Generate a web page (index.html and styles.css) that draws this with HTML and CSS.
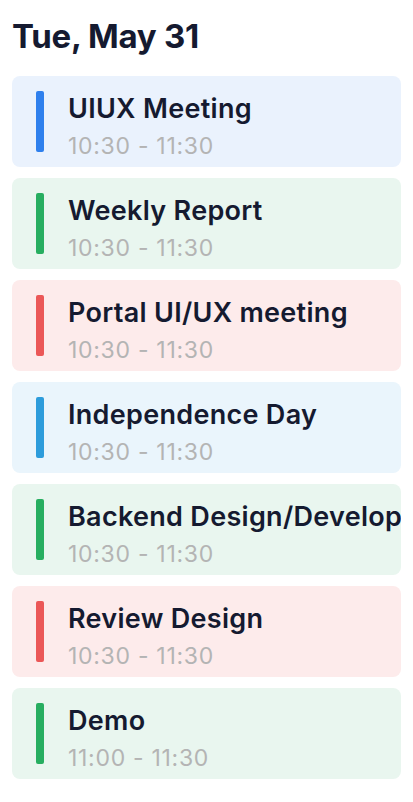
FILE: index.html
```html
<!DOCTYPE html>
<html lang="en">
<head>
<meta charset="utf-8">
<title>Schedule</title>
<link rel="stylesheet" href="styles.css">
</head>
<body>
<main class="day">
  <h1 class="day-title">Tue, May 31</h1>
  <ul class="events">
    <li class="event event-blue"><span class="bar"></span><div class="info"><div class="name">UIUX Meeting</div><div class="time">10:30 - 11:30</div></div></li>
    <li class="event event-green"><span class="bar"></span><div class="info"><div class="name">Weekly Report</div><div class="time">10:30 - 11:30</div></div></li>
    <li class="event event-red"><span class="bar"></span><div class="info"><div class="name">Portal UI/UX meeting</div><div class="time">10:30 - 11:30</div></div></li>
    <li class="event event-sky"><span class="bar"></span><div class="info"><div class="name">Independence Day</div><div class="time">10:30 - 11:30</div></div></li>
    <li class="event event-green"><span class="bar"></span><div class="info"><div class="name">Backend Design/Development</div><div class="time">10:30 - 11:30</div></div></li>
    <li class="event event-red"><span class="bar"></span><div class="info"><div class="name">Review Design</div><div class="time">10:30 - 11:30</div></div></li>
    <li class="event event-green"><span class="bar"></span><div class="info"><div class="name">Demo</div><div class="time">11:00 - 11:30</div></div></li>
  </ul>
</main>
</body>
</html>
```

FILE: styles.css
```css
* { box-sizing: border-box; }
html, body { margin: 0; padding: 0; background: #ffffff; }
body {
  font-family: Inter, "Noto Sans", sans-serif;
  color: #151a30;
}
.day {
  padding: 14px 12px 0 12px;
}
.day-title {
  margin: 0;
  font-size: 33px;
  line-height: 44px;
  font-weight: 700;
  letter-spacing: -0.3px;
  color: #151a30;
}
.events {
  list-style: none;
  margin: 18px 0 0 0;
  padding: 0;
  display: flex;
  flex-direction: column;
  gap: 11px;
}
.event {
  display: flex;
  align-items: flex-start;
  gap: 24px;
  height: 91px;
  padding: 15px 0 0 24px;
  border-radius: 8px;
  overflow: hidden;
}
.bar {
  flex: 0 0 8px;
  width: 8px;
  height: 61px;
  border-radius: 2px;
}
.info {
  display: flex;
  flex-direction: column;
  min-width: 0;
  white-space: nowrap;
}
.name {
  font-size: 27px;
  line-height: 35px;
  font-weight: 600;
  letter-spacing: 0.3px;
  color: #151a30;
}
.time {
  margin-top: 6px;
  font-size: 23px;
  line-height: 28px;
  font-weight: 400;
  letter-spacing: 0.7px;
  color: #b4b4b4;
}
.event-blue { background: #eaf2fd; }
.event-blue .bar { background: #2f80ed; }
.event-green { background: #e9f6ef; }
.event-green .bar { background: #27ae60; }
.event-red { background: #fdebeb; }
.event-red .bar { background: #eb5757; }
.event-sky { background: #eaf5fc; }
.event-sky .bar { background: #2d9cdb; }
```
